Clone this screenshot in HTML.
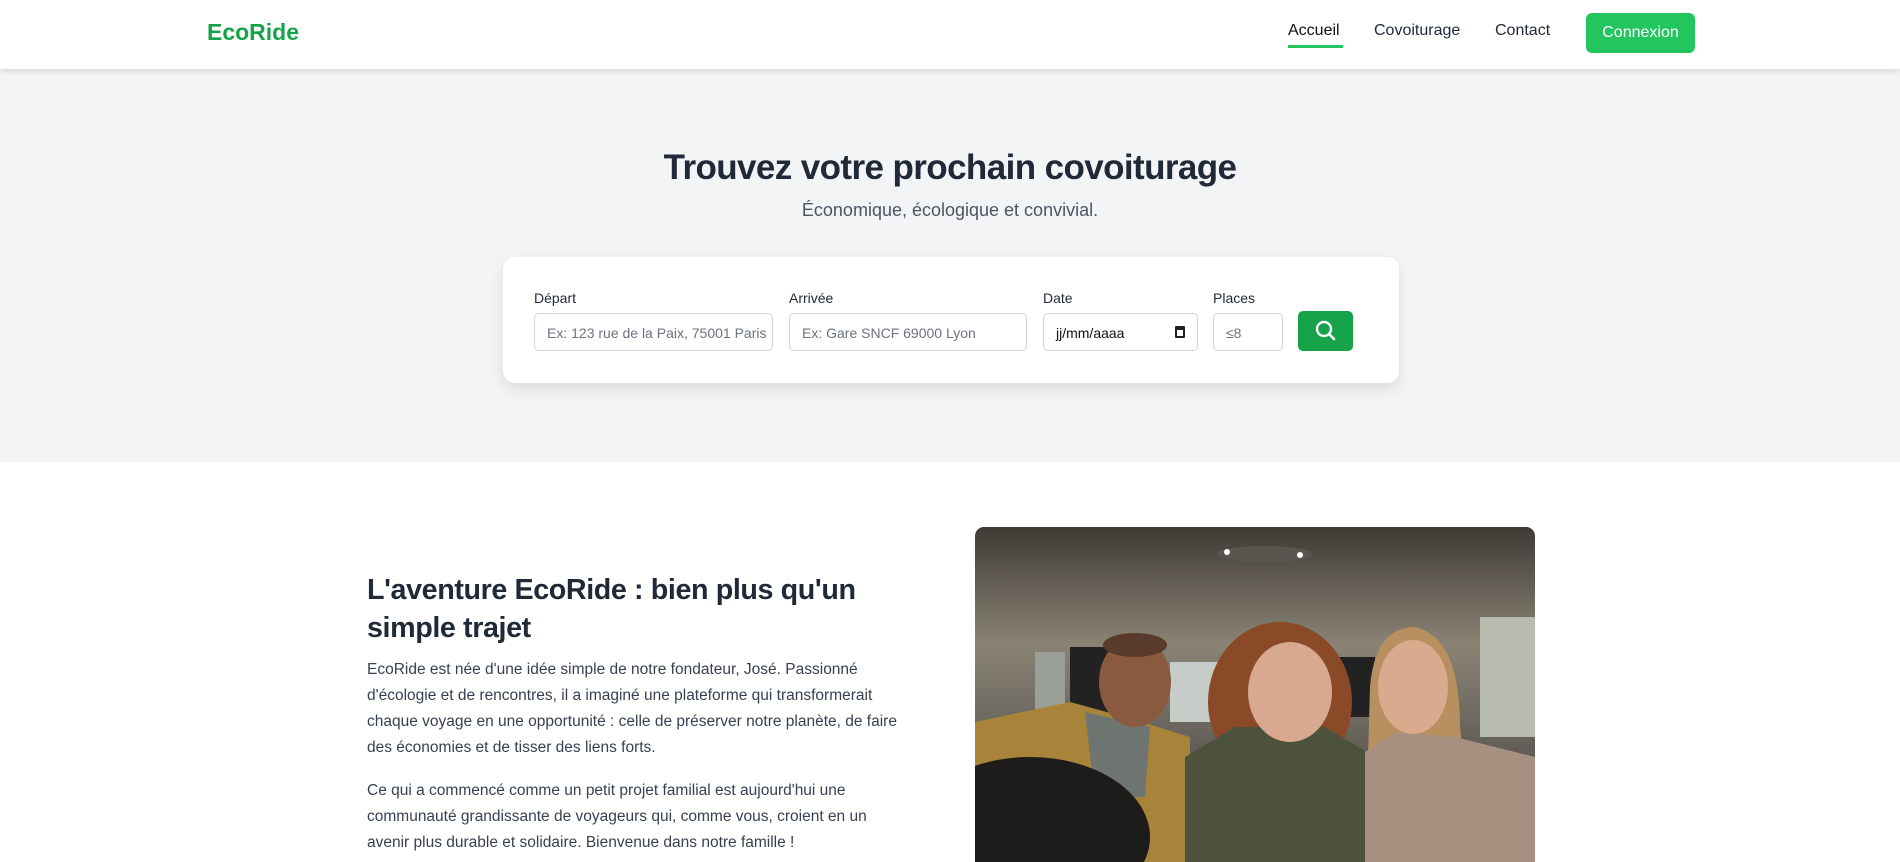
<!DOCTYPE html>
<html><head><meta charset="utf-8"><style>
*{box-sizing:border-box;margin:0;padding:0}
html,body{width:1900px;height:862px;overflow:hidden}
body{font-family:"Liberation Sans",sans-serif;background:#fff;color:#1f2937;position:relative}
.nav{position:absolute;top:0;left:0;width:1900px;height:69px;background:#fff;box-shadow:0 2px 6px rgba(0,0,0,.12);z-index:2}
.logo{position:absolute;left:207px;top:19px;font-size:23px;font-weight:bold;color:#16a34a}
.nl{position:absolute;top:22px;font-size:16px;color:#1f2937}
.btn{position:absolute;left:1586px;top:13px;width:109px;height:40px;background:#22c55e;color:#fff;border-radius:6px;font-size:16px;text-align:center;line-height:40px}
.hero{position:absolute;top:69px;left:0;width:1900px;height:393px;background:#f3f4f6}
h1{position:absolute;top:148px;width:1900px;text-align:center;font-size:35px;font-weight:bold;color:#1f2937;letter-spacing:-0.6px}
.sub{position:absolute;top:200px;width:1900px;text-align:center;font-size:18px;color:#4b5563}
.card{position:absolute;left:503px;top:257px;width:896px;height:126px;background:#fff;border-radius:12px;box-shadow:0 6px 14px rgba(0,0,0,.1)}
.lb{position:absolute;top:290px;font-size:14px;color:#1f2937}
.in{position:absolute;top:313px;height:38px;border:1px solid #d1d5db;border-radius:5px;font-size:14px;color:#6b7280;padding:11px 12px;white-space:nowrap;overflow:hidden}
.sb{position:absolute;left:1298px;top:311px;width:55px;height:40px;background:#16a34a;border-radius:5px}
h2{position:absolute;left:367px;top:571px;font-size:28.7px;font-weight:bold;line-height:38px;color:#1f2937;width:540px;letter-spacing:-0.4px}
.p{position:absolute;left:367px;font-size:15.5px;line-height:26px;color:#374151;width:540px}
.img{position:absolute;left:975px;top:527px;width:560px;height:335px;border-radius:9px 9px 0 0;overflow:hidden}
</style></head><body>
<div class="nav">
<div class="logo">EcoRide</div>
<div class="nl" style="left:1288px;color:#111">Accueil</div>
<div style="position:absolute;left:1288px;top:45px;width:55px;height:3px;background:#22c55e"></div>
<div class="nl" style="left:1374px">Covoiturage</div>
<div class="nl" style="left:1495px">Contact</div>
<div class="btn">Connexion</div>
</div>
<div class="hero"></div>
<h1>Trouvez votre prochain covoiturage</h1>
<div class="sub">Économique, écologique et convivial.</div>
<div class="card"></div>
<div class="lb" style="left:534px">Départ</div>
<div class="lb" style="left:789px">Arrivée</div>
<div class="lb" style="left:1043px">Date</div>
<div class="lb" style="left:1213px">Places</div>
<div class="in" style="left:534px;width:239px">Ex: 123 rue de la Paix, 75001 Paris</div>
<div class="in" style="left:789px;width:238px">Ex: Gare SNCF 69000 Lyon</div>
<div class="in" style="left:1043px;width:155px;color:#111">jj/mm/aaaa<span style="position:absolute;right:12px;top:12px;width:10px;height:12px;border:2px solid #222;border-top-width:4px;border-radius:1px"></span></div>
<div class="in" style="left:1213px;width:70px">≤8</div>
<div class="sb"><svg width="55" height="40" viewBox="0 0 55 40"><circle cx="26" cy="18" r="7" fill="none" stroke="#fff" stroke-width="2.4"/><path d="M31 23l5 5" stroke="#fff" stroke-width="2.6" stroke-linecap="round"/></svg></div>
<h2>L'aventure EcoRide : bien plus qu'un simple trajet</h2>
<div class="p" style="top:657px">EcoRide est née d'une idée simple de notre fondateur, José. Passionné d'écologie et de rencontres, il a imaginé une plateforme qui transformerait chaque voyage en une opportunité : celle de préserver notre planète, de faire des économies et de tisser des liens forts.</div>
<div class="p" style="top:778px">Ce qui a commencé comme un petit projet familial est aujourd'hui une communauté grandissante de voyageurs qui, comme vous, croient en un avenir plus durable et solidaire. Bienvenue dans notre famille !</div>
<div class="img"><svg width="560" height="335" viewBox="0 0 560 335">
<defs><linearGradient id="g" x1="0" y1="0" x2="0" y2="1"><stop offset="0" stop-color="#3e3a35"/><stop offset=".35" stop-color="#8a8375"/><stop offset=".6" stop-color="#6a665e"/><stop offset="1" stop-color="#3a3630"/></linearGradient></defs>
<rect width="560" height="335" fill="url(#g)"/>
<rect x="60" y="125" width="30" height="60" fill="#9aa098"/>
<rect x="195" y="135" width="70" height="60" fill="#c8ccc8"/>
<rect x="505" y="90" width="55" height="120" fill="#b8bcb0"/>
<rect x="95" y="120" width="45" height="80" fill="#222"/>
<rect x="360" y="130" width="40" height="60" fill="#222"/>
<ellipse cx="290" cy="27" rx="48" ry="8" fill="#5a554e"/>
<circle cx="252" cy="25" r="3" fill="#fff"/><circle cx="325" cy="28" r="3" fill="#fff"/>
<path d="M0 195 L95 175 L150 190 L215 210 L215 335 L0 335Z" fill="#a8843a"/>
<path d="M110 185 L175 200 L170 270 L120 270Z" fill="#6e7470"/>
<ellipse cx="160" cy="155" rx="36" ry="45" fill="#8a5a40"/>
<ellipse cx="160" cy="118" rx="32" ry="12" fill="#5a3a2a"/>
<ellipse cx="305" cy="175" rx="72" ry="80" fill="#8a4a28"/>
<path d="M210 230 L260 200 L350 200 L400 230 L410 335 L210 335Z" fill="#4c523c"/>
<ellipse cx="315" cy="165" rx="42" ry="50" fill="#d8a890"/>
<path d="M395 160 Q400 100 440 100 Q485 110 485 200 L500 335 L390 335Z" fill="#b89060"/>
<path d="M390 225 L420 205 L480 210 L560 230 L560 335 L390 335Z" fill="#a89080"/>
<ellipse cx="438" cy="160" rx="35" ry="47" fill="#d9aa8e"/>
<ellipse cx="55" cy="310" rx="120" ry="80" fill="#1e1c1a"/>
</svg></div>
</body></html>
